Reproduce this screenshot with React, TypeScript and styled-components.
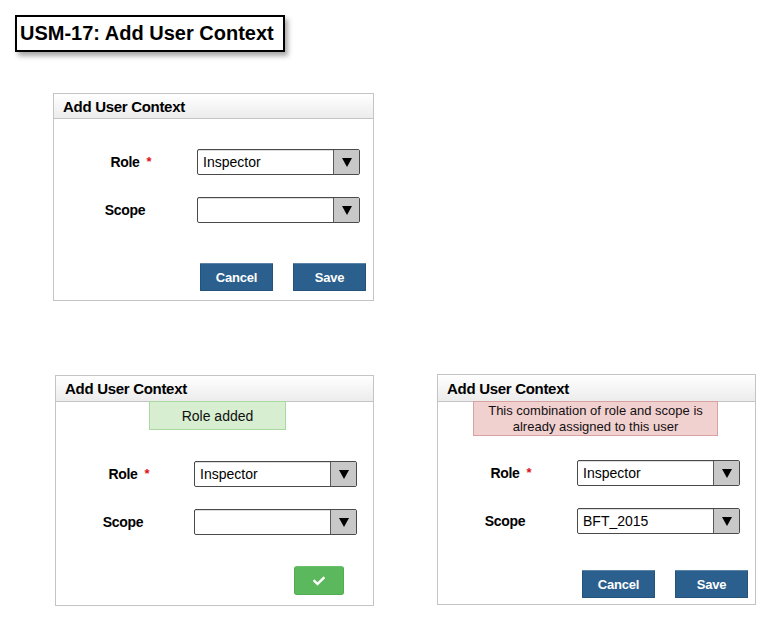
import React from 'react';
import styled, { createGlobalStyle } from 'styled-components';
import { FaCheck } from 'react-icons/fa';

const GlobalStyle = createGlobalStyle`
  html, body {
    margin: 0;
    padding: 0;
    background: #ffffff;
  }
  body {
    font-family: "Liberation Sans", Arial, sans-serif;
    color: #000;
  }
`;

const Page = styled.div`
  width: 770px;
  height: 620px;
  box-sizing: border-box;
  padding: 15px 0 0 15px;
  display: flex;
  flex-direction: column;
  align-items: flex-start;
`;

const TitleBox = styled.div`
  box-sizing: border-box;
  width: 270px;
  height: 37px;
  border: 2px solid #000;
  background: #fff;
  box-shadow: 3px 4px 5px rgba(0, 0, 0, 0.35);
  font-size: 20px;
  font-weight: bold;
  display: flex;
  align-items: center;
  padding-left: 3px;
`;

const TopRow = styled.div`
  margin: 41px 0 0 38px;
`;

const BottomRow = styled.div`
  margin: 73px 0 0 40px;
  display: flex;
  align-items: flex-start;
  gap: 63px;
`;

const Panel = styled.div<{ $w: number; $top?: number }>`
  box-sizing: border-box;
  width: ${(p) => p.$w}px;
  margin-top: ${(p) => p.$top || 0}px;
  border: 1px solid #c4c4c4;
  background: #fff;
  display: flex;
  flex-direction: column;
`;

const Header = styled.div<{ $h: number }>`
  height: ${(p) => p.$h}px;
  box-sizing: border-box;
  border-bottom: 1px solid #c4c4c4;
  background: linear-gradient(#ffffff, #ececec);
  display: flex;
  align-items: center;
  padding-left: 9px;
  font-size: 15px;
  font-weight: bold;
  letter-spacing: -0.3px;
`;

const Message = styled.div<{ $w: number; $h: number; $kind: 'ok' | 'error'; $shift?: number }>`
  box-sizing: border-box;
  width: ${(p) => p.$w}px;
  height: ${(p) => p.$h}px;
  margin: -1px auto 0;
  position: relative;
  left: ${(p) => p.$shift || 0}px;
  background: ${(p) => (p.$kind === 'ok' ? '#d7efd0' : '#f1d0d0')};
  border: 1px solid ${(p) => (p.$kind === 'ok' ? '#a9d9a0' : '#d9a2a2')};
  display: flex;
  align-items: center;
  justify-content: center;
  text-align: center;
  font-size: ${(p) => (p.$kind === 'ok' ? 14 : 13)}px;
  line-height: 16px;
  color: #111;
`;

const Form = styled.div<{ $pad: number; $gap: number; $top: number }>`
  display: grid;
  grid-template-columns: 100px 163px;
  column-gap: ${(p) => p.$gap}px;
  row-gap: 22px;
  padding: ${(p) => p.$top}px 0 0 ${(p) => p.$pad}px;
  align-items: center;
`;

const LabelCell = styled.div`
  display: flex;
  justify-content: center;
`;

const Label = styled.span`
  position: relative;
  font-size: 14px;
  font-weight: bold;
  letter-spacing: -0.3px;
`;

const Required = styled.span`
  position: absolute;
  left: calc(100% + 7px);
  top: 0px;
  color: #e01010;
  font-size: 13px;
  font-weight: bold;
`;

const Select = styled.div`
  box-sizing: border-box;
  height: 26px;
  border: 1px solid #4a4a4a;
  border-radius: 2px;
  display: flex;
  align-items: stretch;
  background: #fff;
  box-shadow: inset 0 1px 0 #ddd;
`;

const SelectValue = styled.div`
  flex: 1;
  display: flex;
  align-items: center;
  padding-left: 5px;
  font-size: 14px;
`;

const Arrow = styled.div`
  width: 25px;
  background: #c8c8c8;
  border-left: 1px solid #5a5a5a;
  display: flex;
  align-items: center;
  justify-content: center;
`;

const Actions = styled.div<{ $top: number; $bottom: number; $right: number }>`
  display: flex;
  justify-content: flex-end;
  gap: 20px;
  padding: ${(p) => p.$top}px ${(p) => p.$right}px ${(p) => p.$bottom}px 0;
`;

const Button = styled.button<{ $w?: number; $h?: number; $green?: boolean }>`
  box-sizing: border-box;
  width: ${(p) => p.$w || 73}px;
  height: ${(p) => p.$h || 28}px;
  margin: 0;
  padding: 0;
  border: 1px solid ${(p) => (p.$green ? '#4fae4f' : '#24527a')};
  border-top-color: ${(p) => (p.$green ? '#6cc06c' : '#5b84a8')};
  border-radius: ${(p) => (p.$green ? 3 : 1)}px;
  background: ${(p) => (p.$green ? '#5cb85c' : '#2b5f8d')};
  color: #fff;
  font-family: "Liberation Sans", Arial, sans-serif;
  font-size: 13px;
  font-weight: bold;
  letter-spacing: -0.2px;
  display: flex;
  align-items: center;
  justify-content: center;
`;

type FieldProps = { label: string; value?: string; required?: boolean };

function Field({ label, value, required }: FieldProps) {
  return (
    <>
      <LabelCell>
        <Label>
          {label}
          {required && <Required>*</Required>}
        </Label>
      </LabelCell>
      <Select>
        <SelectValue>{value}</SelectValue>
        <Arrow>
          <svg width="10" height="9" viewBox="0 0 10 9">
            <polygon points="0,0 10,0 5,9" fill="#000" />
          </svg>
        </Arrow>
      </Select>
    </>
  );
}

export default function App() {
  return (
    <>
      <GlobalStyle />
      <Page>
        <TitleBox>USM-17: Add User Context</TitleBox>

        <TopRow>
          <Panel $w={321}>
            <Header $h={25}>Add User Context</Header>
            <Form $pad={21} $gap={22} $top={30}>
              <Field label="Role" value="Inspector" required />
              <Field label="Scope" />
            </Form>
            <Actions $top={40} $bottom={9} $right={7}>
              <Button>Cancel</Button>
              <Button>Save</Button>
            </Actions>
          </Panel>
        </TopRow>

        <BottomRow>
          <Panel $w={319} $top={1}>
            <Header $h={26}>Add User Context</Header>
            <Message $w={137} $h={29} $kind="ok" $shift={3}>
              Role added
            </Message>
            <Form $pad={17} $gap={21} $top={31}>
              <Field label="Role" value="Inspector" required />
              <Field label="Scope" />
            </Form>
            <Actions $top={31} $bottom={10} $right={29}>
              <Button $green $w={50} $h={29}>
                <FaCheck size={12} />
              </Button>
            </Actions>
          </Panel>

          <Panel $w={319}>
            <Header $h={27}>Add User Context</Header>
            <Message $w={245} $h={35} $kind="error" $shift={-1}>
              This combination of role and scope is
              <br />
              already assigned to this user
            </Message>
            <Form $pad={17} $gap={22} $top={24}>
              <Field label="Role" value="Inspector" required />
              <Field label="Scope" value="BFT_2015" />
            </Form>
            <Actions $top={36} $bottom={6} $right={7}>
              <Button>Cancel</Button>
              <Button>Save</Button>
            </Actions>
          </Panel>
        </BottomRow>
      </Page>
    </>
  );
}
